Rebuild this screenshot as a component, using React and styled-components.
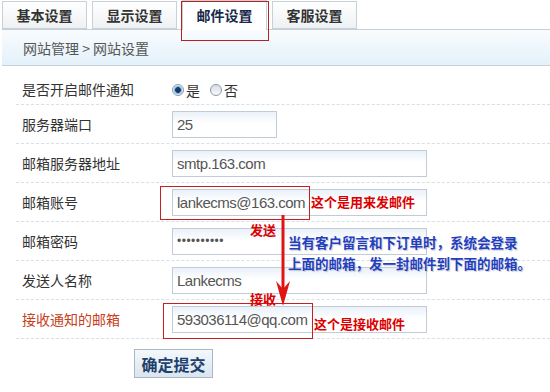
import React from "react";
import styled, { createGlobalStyle, css } from "styled-components";

const GlobalStyle = createGlobalStyle`
  body {
    margin: 0;
    background: #fff;
    font-family: "Noto Sans CJK SC", "Noto Sans", sans-serif;
  }
`;

const tabs = ["基本设置", "显示设置", "邮件设置", "客服设置"];

const fields = [
  { label: "服务器端口", value: "25", narrow: true },
  { label: "邮箱服务器地址", value: "smtp.163.com" },
  { label: "邮箱账号", value: "lankecms@163.com", mark: "send", note: "这个是用来发邮件" },
  { label: "邮箱密码", value: "1234567890", password: true },
  { label: "发送人名称", value: "Lankecms" },
  {
    label: "接收通知的邮箱",
    value: "593036114@qq.com",
    accent: true,
    mark: "receive",
    note: "这个是接收邮件",
  },
];

export default function App() {
  return (
    <Page>
      <GlobalStyle />
      <TabBar>
        {tabs.map((t, i) => (
          <Tab key={t} $active={i === 2}>
            {t}
          </Tab>
        ))}
      </TabBar>
      <Crumb>网站管理 &gt; 网站设置</Crumb>

      <Form>
        <Row $first>
          <Label>是否开启邮件通知</Label>
          <RadioGroup>
            <Radio $checked />
            <RadioText>是</RadioText>
            <Radio />
            <RadioText>否</RadioText>
          </RadioGroup>
        </Row>
        {fields.map((f) => (
          <Row key={f.label}>
            <Label $accent={f.accent}>{f.label}</Label>
            <Field $mark={f.mark}>
              <Input
                readOnly
                type={f.password ? "password" : "text"}
                defaultValue={f.value}
                $narrow={f.narrow}
                $password={f.password}
              />
              {f.note && <Callout $mark={f.mark}>{f.note}</Callout>}
            </Field>
          </Row>
        ))}
        <Footer>
          <Submit type="button">确定提交</Submit>
        </Footer>
      </Form>

      {/* flow annotation drawn over the form */}
      <FlowNote>
        <Ends>
          <Tag>发送</Tag>
          <Tag>接收</Tag>
        </Ends>
        <svg width="20" height="92" viewBox="0 0 20 92">
          <line x1="10" y1="0" x2="10" y2="80" stroke="#e01414" strokeWidth="3" />
          <polygon points="3,66 10,74 17,66 10,91" fill="#e01414" />
        </svg>
        <Hint>
          当有客户留言和下订单时，系统会登录
          <br />
          上面的邮箱，发一封邮件到下面的邮箱。
        </Hint>
      </FlowNote>
    </Page>
  );
}

const Page = styled.div`
  position: relative;
  width: 550px;
  height: 392px;
  overflow: hidden;
  background: #fff;
`;

const TabBar = styled.div`
  display: flex;
  align-items: flex-end;
  gap: 5px;
  height: 29px;
  padding-left: 2px;
  position: relative;
  z-index: 1;
`;

const Tab = styled.div`
  position: relative;
  box-sizing: border-box;
  width: 85px;
  height: ${(p) => (p.$active ? "30px" : "28px")};
  margin-bottom: ${(p) => (p.$active ? "-1px" : "0")};
  border: 1px solid #c9d1d8;
  border-bottom: ${(p) => (p.$active ? "none" : "1px solid #c9d1d8")};
  background: ${(p) =>
    p.$active ? "#fff" : "linear-gradient(#ffffff, #eef1f3)"};
  display: flex;
  align-items: center;
  justify-content: center;
  padding-bottom: ${(p) => (p.$active ? "2px" : "0")};
  font-size: 14px;
  font-weight: bold;
  color: ${(p) => (p.$active ? "#17294a" : "#333")};

  ${(p) =>
    p.$active &&
    css`
      &::after {
        content: "";
        position: absolute;
        left: -2px;
        right: -3px;
        top: 0;
        height: 38px;
        border: 1px solid #b42222;
      }
    `}
`;

const Crumb = styled.div`
  box-sizing: border-box;
  height: 37px;
  margin-left: 2px;
  padding-left: 21px;
  border-top: 1px solid #c6cfd7;
  border-bottom: 1px solid #c6cfd7;
  background: linear-gradient(#f9fcfe, #e3f1fa);
  display: flex;
  align-items: center;
  font-size: 14px;
  color: #555;
`;

const Form = styled.div`
  padding-top: 8px;
`;

const Row = styled.div`
  height: ${(p) => (p.$first ? "30px" : "38px")};
  margin-left: 16px;
  padding-left: 6px;
  display: flex;
  align-items: center;
  border-bottom: 1px dashed #d5e0e8;
`;

const Label = styled.div`
  width: 150px;
  font-size: 14px;
  color: ${(p) => (p.$accent ? "#c8401a" : "#333")};
`;

const RadioGroup = styled.div`
  display: flex;
  align-items: center;
  padding-top: 1px;
`;

const Radio = styled.span`
  box-sizing: border-box;
  width: 12px;
  height: 12px;
  border-radius: 50%;
  border: 1px solid #8d99a8;
  background: ${(p) =>
    p.$checked
      ? "radial-gradient(circle, #1b3a66 0 2.5px, #4f9ad8 3px, #dcecf8 4.5px)"
      : "linear-gradient(#d9dde2, #f8f9fa)"};
  margin-right: 2px;
`;

const RadioText = styled.span`
  font-size: 14px;
  color: #333;
  margin-right: 10px;
`;

const Field = styled.div`
  position: relative;
  display: flex;

  ${(p) =>
    p.$mark &&
    css`
      &::after {
        content: "";
        position: absolute;
        pointer-events: none;
        border: 1px solid #c81e1e;
        left: ${p.$mark === "send" ? "-12px" : "-9px"};
        width: 148px;
        top: -3px;
        height: ${p.$mark === "send" ? "32px" : "34px"};
      }
    `}
`;

const Input = styled.input`
  box-sizing: border-box;
  width: ${(p) => (p.$narrow ? "105px" : "255px")};
  height: 27px;
  margin: 0;
  padding: 0 4px;
  border: 1px solid #c3ccd6;
  background: linear-gradient(#e9f1f9, #ffffff 45%);
  font-family: "Liberation Sans", Arial, sans-serif;
  font-size: ${(p) => (p.$password ? "12px" : "15px")};
  letter-spacing: ${(p) => (p.$password ? "0.5px" : "-0.5px")};
  color: #555;
  outline: none;
`;

const Callout = styled.span`
  position: absolute;
  left: ${(p) => (p.$mark === "send" ? "139px" : "142px")};
  top: ${(p) => (p.$mark === "send" ? "5px" : "10px")};
  font-size: 13px;
  line-height: 16px;
  font-weight: bold;
  color: #dc0000;
  white-space: nowrap;
`;

const Footer = styled.div`
  padding: 10px 0 0 134px;
`;

const Submit = styled.button`
  box-sizing: border-box;
  width: 79px;
  height: 29px;
  border: 1px solid #a9b6c4;
  background: linear-gradient(#f4f8fb, #d9e5ef);
  font-family: "Noto Sans CJK SC", sans-serif;
  font-size: 16px;
  font-weight: bold;
  color: #1f3f6c;
  padding: 0;
`;

const FlowNote = styled.div`
  position: absolute;
  left: 250px;
  top: 215px;
  display: flex;
  align-items: flex-start;
`;

const Ends = styled.div`
  width: 23px;
  height: 85px;
  padding-top: 7px;
  display: flex;
  flex-direction: column;
  justify-content: space-between;
`;

const Tag = styled.span`
  font-size: 13px;
  line-height: 16px;
  font-weight: bold;
  color: #dc0000;
  white-space: nowrap;
`;

const Hint = styled.div`
  margin: 17px 0 0 -5px;
  font-size: 13.5px;
  line-height: 21px;
  font-weight: bold;
  color: #1f3fbf;
  white-space: nowrap;
  text-shadow: 0 0 2px #fff, 1px 1px 1px rgba(60, 60, 90, 0.35);
`;
